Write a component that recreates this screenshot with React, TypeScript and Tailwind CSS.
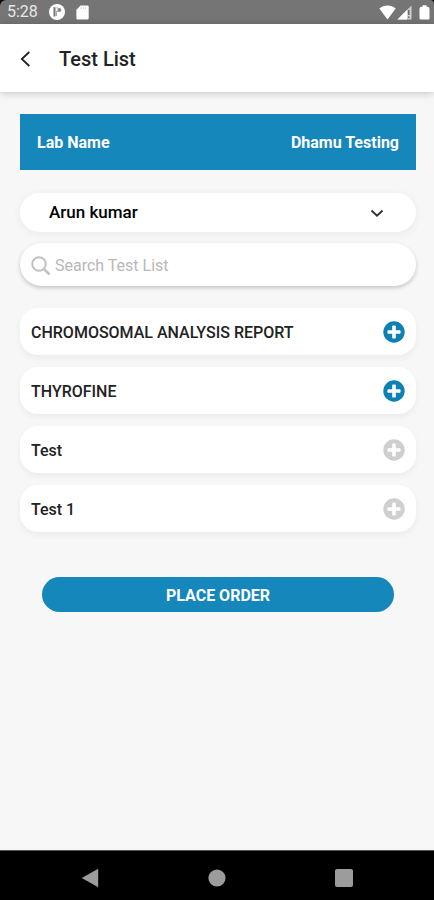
import { useState } from "react";

type Test = { id: number; name: string; added: boolean };

const PATIENTS = ["Arun kumar"];

const INITIAL_TESTS: Test[] = [
  { id: 1, name: "CHROMOSOMAL ANALYSIS REPORT", added: true },
  { id: 2, name: "THYROFINE", added: true },
  { id: 3, name: "Test", added: false },
  { id: 4, name: "Test 1", added: false },
];

function StatusBar() {
  return (
    <div className="bg-black">
      <div className="flex h-6 items-center justify-between rounded-tl-md rounded-tr-sm bg-[#757575] pr-1 pl-[7px] text-white">
        <div className="flex items-center">
          <span className="w-[42px] text-base leading-6 text-[#e8e8e8]">5:28</span>
          <svg width="16" height="16" viewBox="0 0 16 16" aria-hidden="true">
            <circle cx="8" cy="8" r="8" fill="#fff" />
            <path d="M5.5 3.2v9.3" stroke="#757575" strokeWidth="2" />
            <path
              d="M7.4 3.9h1.4M7.4 12V7.6h1.2"
              fill="none"
              stroke="#a5a5a5"
              strokeWidth="1.2"
            />
            <circle cx="10.3" cy="6" r="2" fill="#858585" />
          </svg>
          <svg className="ml-[11px]" width="13" height="15" viewBox="0 0 13 15" aria-hidden="true">
            <path
              d="M4.6.5h6.9a1.2 1.2 0 0 1 1.2 1.2v11.6a1.2 1.2 0 0 1-1.2 1.2H1.6a1.2 1.2 0 0 1-1.2-1.2V4.7z"
              fill="#fff"
            />
            <path d="M5 2.4v1.4M7.3 2.4v1.4M9.6 2.4v1.4" stroke="#c4c4c4" />
          </svg>
        </div>
        <div className="flex items-center">
          <svg width="17" height="15" viewBox="0 0 17 15" aria-hidden="true">
            <path d="M8.5 14.5.3 3.6C2.6 1.6 5.4.5 8.5.5s5.9 1.1 8.2 3.1z" fill="#fff" />
          </svg>
          <svg className="ml-px" width="15" height="15" viewBox="0 0 15 15" aria-hidden="true">
            <path d="M14.5.5v14H.5z" fill="#d0d0d0" />
            <path d="M10 5v9.500H.5z" fill="#fff" />
            <path d="M11.800 5v5M11.800 11.500v1.500" stroke="#666" strokeWidth="1.500" />
          </svg>
          <svg className="ml-[7px]" width="11" height="15" viewBox="0 0 11 15" aria-hidden="true">
            <path
              d="M3.5.3h4v1.400h.8a2.200 2.200 0 0 1 2.200 2.200v9.600a1 1 0 0 1-1 1h-8a1 1 0 0 1-1-1V3.900a2.200 2.200 0 0 1 2.200-2.200h.8z"
              fill="#fff"
            />
          </svg>
        </div>
      </div>
    </div>
  );
}

function PlusCircle() {
  return (
    <svg width="22" height="22" viewBox="0 0 22 22" aria-hidden="true">
      <circle cx="11" cy="11" r="10.7" fill="currentColor" />
      <path
        d="M11 5v12M5 11h12"
        stroke="#fff"
        strokeWidth="3.6"
      />
      <path
        d="M10 5h2M10 17h2M5 10v2M17 10v2"
        stroke="#fff"
        strokeWidth="1.2"
        strokeLinecap="round"
      />
    </svg>
  );
}

export default function App() {
  const [tests, setTests] = useState(INITIAL_TESTS);
  const [patient, setPatient] = useState(PATIENTS[0]);
  const [query, setQuery] = useState("");

  const toggle = (id: number) =>
    setTests((prev) => prev.map((t) => (t.id === id ? { ...t, added: !t.added } : t)));

  const visible = tests.filter((t) => t.name.toLowerCase().includes(query.toLowerCase()));

  return (
    <div className="flex min-h-screen flex-col bg-[#f7f7f7] font-['Roboto',sans-serif] text-[#222]">
      <StatusBar />

      <header className="flex h-[68px] items-center bg-white pt-0.5 pl-[19px] shadow-[0_1px_8px_rgba(0,0,0,0.22)]">
        <button type="button" aria-label="Back" className="w-10">
          <svg width="12" height="18" viewBox="0 0 12 18" aria-hidden="true">
            <path d="M10.3 2 2.8 9l7.5 7" fill="none" stroke="#222" strokeWidth="1.8" />
          </svg>
        </button>
        <h1 className="text-xl font-medium">Test List</h1>
      </header>

      <main className="flex flex-1 flex-col pt-[22px] pr-[18px] pl-5">
        <div className="flex h-14 items-center justify-between bg-[#1587bb] px-[17px] pt-0.5 font-bold text-white">
          <span>Lab Name</span>
          <span>Dhamu Testing</span>
        </div>

        {/* patient */}
        <div className="relative mt-[23px]">
          <select
            aria-label="Patient"
            value={patient}
            onChange={(e) => setPatient(e.target.value)}
            className="block h-[39px] w-full appearance-none rounded-full bg-white pt-px pr-14 pl-[29px] text-[17px] font-medium text-black shadow-[0_2px_10px_rgba(0,0,0,0.06)] outline-none"
          >
            {PATIENTS.map((name) => (
              <option key={name}>{name}</option>
            ))}
          </select>
          <svg
            className="pointer-events-none absolute top-4 right-8"
            width="14"
            height="9"
            viewBox="0 0 14 9"
            aria-hidden="true"
          >
            <path d="m1.5 1.5 5.500 5.300 5.500-5.300" fill="none" stroke="#333" strokeWidth="1.9" />
          </svg>
        </div>

        {/* search */}
        <label className="mt-[11px] flex h-[43px] items-center rounded-full bg-white pt-0.5 pl-[11px] shadow-[0_2px_4px_rgba(0,0,0,0.2)]">
          <svg width="20" height="20" viewBox="0 0 20 20" aria-hidden="true">
            <circle cx="8" cy="8" r="6.8" fill="none" stroke="#c2c2c2" strokeWidth="2" />
            <path d="m13 13 5.5 5.5" stroke="#c2c2c2" strokeWidth="2.6" />
          </svg>
          <input
            type="text"
            aria-label="Search Test List"
            placeholder="Search Test List"
            value={query}
            onChange={(e) => setQuery(e.target.value)}
            className="ml-1 min-w-0 flex-1 text-base outline-none placeholder:text-[#b8b8b8]"
          />
        </label>

        {/* tests */}
        <ul className="mt-[22px] flex flex-col gap-3">
          {visible.map((test) => (
            <li
              key={test.id}
              className="flex h-[47px] items-center justify-between rounded-[18px] bg-white px-[11px] shadow-[0_3px_6px_rgba(0,0,0,0.05)]"
            >
              <span className="pt-0.5 font-medium">{test.name}</span>
              <button
                type="button"
                aria-label={`Add ${test.name}`}
                aria-pressed={test.added}
                onClick={() => toggle(test.id)}
                className={test.added ? "text-[#0f80b2]" : "text-[#cfcfcf]"}
              >
                <PlusCircle />
              </button>
            </li>
          ))}
        </ul>

        <button
          type="button"
          className="mx-[22px] mt-[45px] h-[35px] rounded-full bg-[#1587bb] pt-0.5 text-base font-bold text-white"
        >
          PLACE ORDER
        </button>
      </main>

      <nav className="grid h-[50px] grid-cols-3 place-items-center border-t border-[#555] bg-black px-[26px] pt-1 text-[#9c9c9c]">
        <button type="button" aria-label="System back">
          <svg width="18" height="20" viewBox="0 0 18 20" aria-hidden="true">
            <path d="M17.2.8v18.4L.8 10z" fill="currentColor" />
          </svg>
        </button>
        <button type="button" aria-label="Home">
          <svg width="18" height="18" viewBox="0 0 18 18" aria-hidden="true">
            <circle cx="9" cy="9" r="8.6" fill="currentColor" />
          </svg>
        </button>
        <button type="button" aria-label="Recent apps">
          <svg width="18" height="18" viewBox="0 0 18 18" aria-hidden="true">
            <rect width="18" height="18" rx="2" fill="currentColor" />
          </svg>
        </button>
      </nav>
    </div>
  );
}
